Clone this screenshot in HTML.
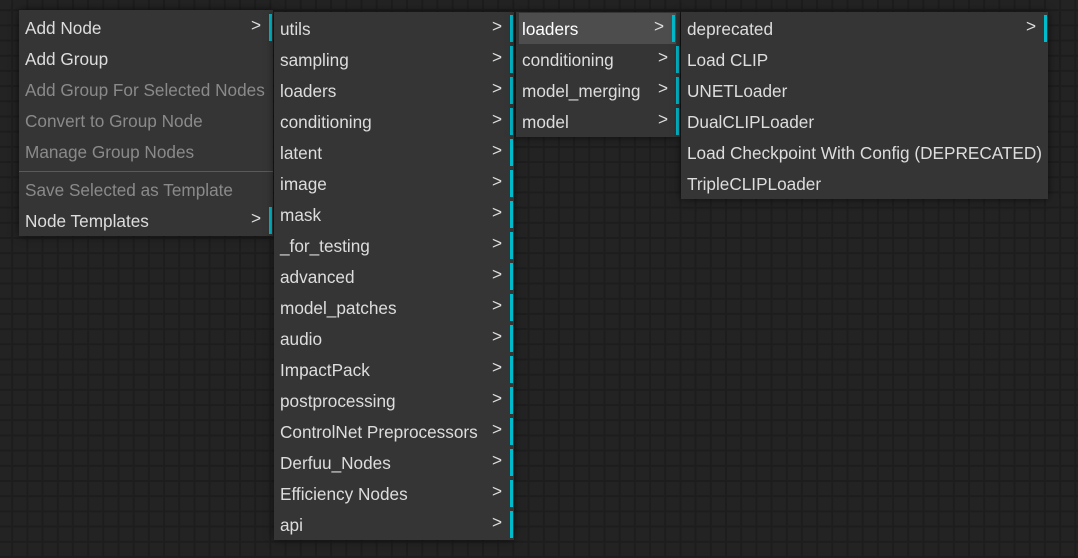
<!DOCTYPE html>
<html><head><style>
body{margin:0;width:1078px;height:558px;overflow:hidden;position:relative;
background-color:#232323;
background-image:linear-gradient(#1d1d1d 2px,transparent 2px),linear-gradient(90deg,#1d1d1d 2px,transparent 2px);
background-size:15.2px 15.2px;background-position:-4px -6px;
font-family:"Liberation Sans",sans-serif;font-size:17.2px;}
.m{position:absolute;background:#353535;box-shadow:0 0 8px rgba(0,0,0,.6);}
.r{position:absolute;left:0;right:0;height:31px;line-height:33px;color:#ddd;white-space:nowrap}
.r span{position:absolute;left:6px}
.d{color:#8a8a8a}
.a::after{content:">";position:absolute;right:12px;top:-3px;color:#ddd}
.a::before{content:"";position:absolute;right:1px;top:2px;width:3px;height:27px;background:#0bc}
.h{background:#4d4d4d;color:#fff}
.sep{position:absolute;left:0;right:0;height:1px;background:#5a5a5a}
</style></head><body>
<div class="m" style="left:19px;top:10px;width:254px;height:226px">
<div class="r a" style="top:2px"><span>Add Node</span></div>
<div class="r" style="top:33px"><span>Add Group</span></div>
<div class="r d" style="top:64px"><span>Add Group For Selected Nodes</span></div>
<div class="r d" style="top:95px"><span>Convert to Group Node</span></div>
<div class="r d" style="top:126px"><span>Manage Group Nodes</span></div>
<div class="sep" style="top:161px"></div>
<div class="r d" style="top:164px"><span>Save Selected as Template</span></div>
<div class="r a" style="top:195px"><span>Node Templates</span></div>
</div>
<div class="m" style="left:274px;top:12px;width:240px;height:528px">
<div class="r a" style="top:1px"><span>utils</span></div>
<div class="r a" style="top:32px"><span>sampling</span></div>
<div class="r a" style="top:63px"><span>loaders</span></div>
<div class="r a" style="top:94px"><span>conditioning</span></div>
<div class="r a" style="top:125px"><span>latent</span></div>
<div class="r a" style="top:156px"><span>image</span></div>
<div class="r a" style="top:187px"><span>mask</span></div>
<div class="r a" style="top:218px"><span>_for_testing</span></div>
<div class="r a" style="top:249px"><span>advanced</span></div>
<div class="r a" style="top:280px"><span>model_patches</span></div>
<div class="r a" style="top:311px"><span>audio</span></div>
<div class="r a" style="top:342px"><span>ImpactPack</span></div>
<div class="r a" style="top:373px"><span>postprocessing</span></div>
<div class="r a" style="top:404px"><span>ControlNet Preprocessors</span></div>
<div class="r a" style="top:435px"><span>Derfuu_Nodes</span></div>
<div class="r a" style="top:466px"><span>Efficiency Nodes</span></div>
<div class="r a" style="top:497px"><span>api</span></div>
</div>
<div class="m" style="left:516px;top:12px;width:164px;height:125px">
<div class="r a h" style="top:1px;left:3px;right:4px"><span style="left:3px">loaders</span></div>
<div class="r a" style="top:32px"><span>conditioning</span></div>
<div class="r a" style="top:63px"><span>model_merging</span></div>
<div class="r a" style="top:94px"><span>model</span></div>
</div>
<div class="m" style="left:681px;top:12px;width:367px;height:187px">
<div class="r a" style="top:1px"><span>deprecated</span></div>
<div class="r" style="top:32px"><span>Load CLIP</span></div>
<div class="r" style="top:63px"><span>UNETLoader</span></div>
<div class="r" style="top:94px"><span>DualCLIPLoader</span></div>
<div class="r" style="top:125px"><span>Load Checkpoint With Config (DEPRECATED)</span></div>
<div class="r" style="top:156px"><span>TripleCLIPLoader</span></div>
</div>
</body></html>
